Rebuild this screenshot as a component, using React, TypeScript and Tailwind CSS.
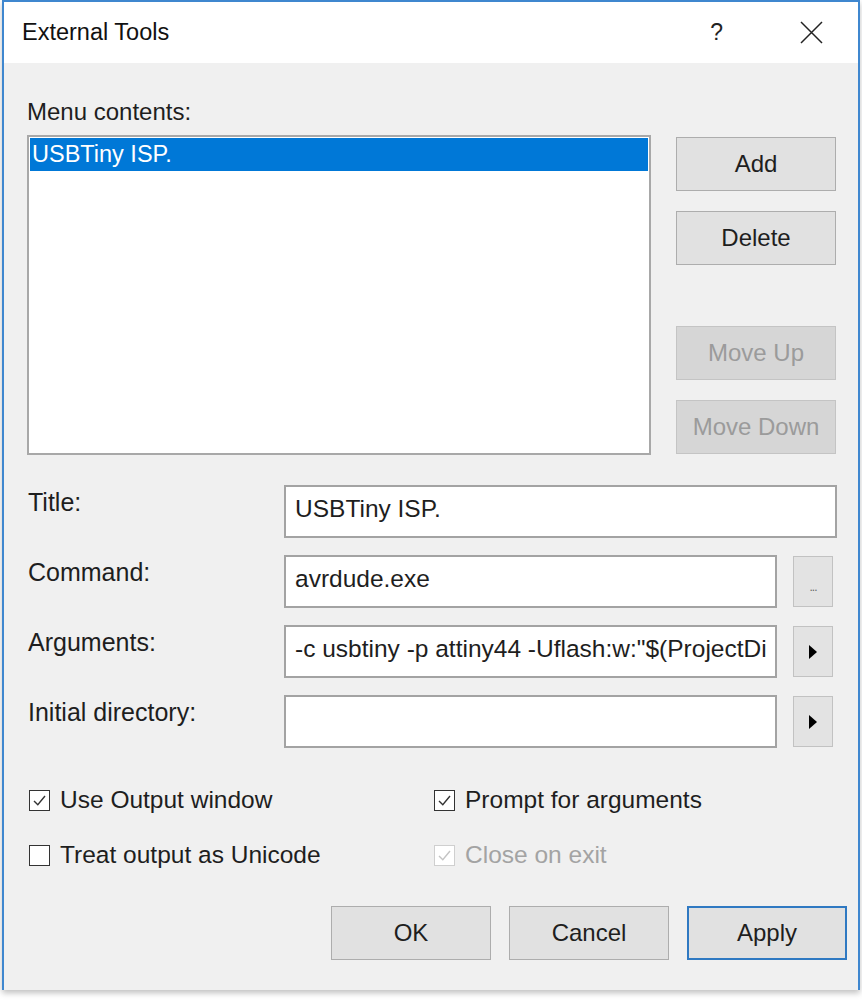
import React from "react";

const font = { fontFamily: '"Liberation Sans", Arial, sans-serif' };

function Btn({ label, disabled, primary }: { label: string; disabled?: boolean; primary?: boolean }) {
  return (
    <div
      className={
        "flex h-[54px] w-[160px] items-center justify-center text-[24px] " +
        (disabled
          ? "border border-[#c4c4c4] bg-[#d6d6d6] text-[#9b9b9b]"
          : primary
          ? "border-2 border-[#2f79c2] bg-[#e1e1e1] text-[#1e1e1e]"
          : "border border-[#adadad] bg-[#e1e1e1] text-[#1e1e1e]")
      }
    >
      {label}
    </div>
  );
}

function Check({ checked, disabled }: { checked?: boolean; disabled?: boolean }) {
  return (
    <div
      className={
        "flex h-[21px] w-[21px] shrink-0 items-center justify-center border-[1.5px] bg-white " +
        (disabled ? "border-[#cfcfcf]" : "border-[#333]")
      }
    >
      {checked && (
        <svg width="17" height="17" viewBox="0 0 17 17">
          <path
            d="M3 9 L6.8 12.8 L14 4"
            fill="none"
            stroke={disabled ? "#c4c4c4" : "#333"}
            strokeWidth="1.4"
          />
        </svg>
      )}
    </div>
  );
}

function SmallBtn({ children }: { children: React.ReactNode }) {
  return (
    <div className="flex h-[51px] w-[40px] shrink-0 items-center justify-center border border-[#c2c2c2] bg-[#e3e3e3]">
      {children}
    </div>
  );
}

function Arrow() {
  return (
    <svg width="10" height="16" viewBox="0 0 10 16">
      <polygon points="1,1 9,8 1,15" fill="#000" />
    </svg>
  );
}

function Field({ value, width }: { value?: string; width: string }) {
  return (
    <div
      className={
        "flex h-[53px] items-center overflow-hidden whitespace-nowrap border-2 border-[#a3a3a3] bg-white pb-[4px] pl-[9px] text-[24.5px] text-[#1e1e1e] " +
        width
      }
    >
      <span className="whitespace-nowrap">{value}</span>
    </div>
  );
}

function Label({ text }: { text: string }) {
  return (
    <div className="w-[257px] shrink-0 pl-[1px] pt-[3px] text-[25px] leading-[28px] text-[#1e1e1e]">
      {text}
    </div>
  );
}

export default function App() {
  return (
    <div className="h-[1000px] w-[862px] bg-white" style={font}>
      <div className="ml-[2px] w-[858px] border-x-2 border-t-2 border-[#3f87cf] shadow-[0_3px_6px_rgba(0,0,0,0.25)]">
        {/* title bar */}
        <div className="flex h-[61px] items-center bg-white pl-[18px]">
          <div className="text-[23.5px] text-[#111]">External Tools</div>
          <div className="ml-auto mr-[77px] text-[23px] text-[#222]">?</div>
          <svg className="mr-[35px]" width="23" height="23" viewBox="0 0 23 23">
            <path d="M1 1 L22 22 M22 1 L1 22" stroke="#222" strokeWidth="1.5" />
          </svg>
        </div>

        {/* body */}
        <div className="h-[927px] bg-[#f0f0f0] pl-[23px] pt-[35px]">
          <div className="h-[28px] text-[24px] leading-[28px] text-[#1e1e1e]">Menu contents:</div>

          <div className="mt-[9px] flex gap-[25px]">
            <div className="h-[320px] w-[624px] border-2 border-[#a8a8a8] bg-white p-[1px]">
              <div className="flex h-[33px] items-center bg-[#0078d7] pl-[2px] text-[23.5px] text-white">
                USBTiny ISP.
              </div>
            </div>
            <div className="flex flex-col pt-[2px]">
              <Btn label="Add" />
              <div className="mt-[20px]">
                <Btn label="Delete" />
              </div>
              <div className="mt-[61px]">
                <Btn label="Move Up" disabled />
              </div>
              <div className="mt-[20px]">
                <Btn label="Move Down" disabled />
              </div>
            </div>
          </div>

          {/* form */}
          <div className="mt-[30px] flex flex-col gap-[17px]">
            <div className="flex">
              <Label text="Title:" />
              <Field value="USBTiny ISP." width="w-[553px]" />
            </div>
            <div className="flex items-start">
              <Label text="Command:" />
              <Field value="avrdude.exe" width="w-[493px]" />
              <div className="ml-[16px] pt-[1px]">
                <SmallBtn>
                  <span className="pt-[10px] text-[12px] leading-none tracking-[-1px] text-[#666]">...</span>
                </SmallBtn>
              </div>
            </div>
            <div className="flex items-start">
              <Label text="Arguments:" />
              <Field value={'-c usbtiny -p attiny44 -Uflash:w:"$(ProjectDi'} width="w-[493px]" />
              <div className="ml-[16px] pt-[1px]">
                <SmallBtn>
                  <Arrow />
                </SmallBtn>
              </div>
            </div>
            <div className="flex items-start">
              <Label text="Initial directory:" />
              <Field width="w-[493px]" />
              <div className="ml-[16px] pt-[1px]">
                <SmallBtn>
                  <Arrow />
                </SmallBtn>
              </div>
            </div>
          </div>

          {/* checkboxes */}
          <div className="mt-[38px] flex flex-col gap-[27px] pl-[2px] text-[24.5px] leading-[28px]">
            <div className="flex">
              <div className="flex w-[405px] items-center gap-[10px] text-[#1e1e1e]">
                <Check checked />
                <span>Use Output window</span>
              </div>
              <div className="flex items-center gap-[10px] text-[#1e1e1e]">
                <Check checked />
                <span>Prompt for arguments</span>
              </div>
            </div>
            <div className="flex">
              <div className="flex w-[405px] items-center gap-[10px] text-[#1e1e1e]">
                <Check />
                <span>Treat output as Unicode</span>
              </div>
              <div className="flex items-center gap-[10px] text-[#a3a3a3]">
                <Check checked disabled />
                <span>Close on exit</span>
              </div>
            </div>
          </div>

          {/* bottom buttons */}
          <div className="mt-[37px] flex justify-end gap-[18px] pr-[11px]">
            <Btn label="OK" />
            <Btn label="Cancel" />
            <Btn label="Apply" primary />
          </div>
        </div>
      </div>
    </div>
  );
}
